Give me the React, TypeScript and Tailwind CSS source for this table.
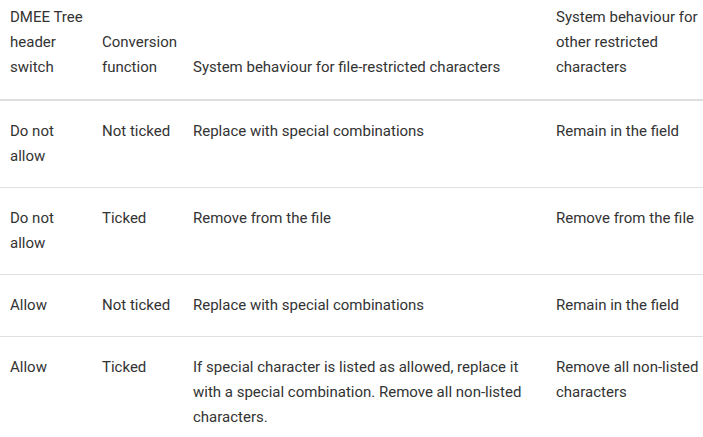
import React from "react";

const rows = [
  ["Do not allow", "Not ticked", "Replace with special combinations", "Remain in the field"],
  ["Do not allow", "Ticked", "Remove from the file", "Remove from the file"],
  ["Allow", "Not ticked", "Replace with special combinations", "Remain in the field"],
  [
    "Allow",
    "Ticked",
    "If special character is listed as allowed, replace it with a special combination. Remove all non-listed characters.",
    "Remove all non-listed characters",
  ],
];

const headers = [
  "DMEE Tree header switch",
  "Conversion function",
  "System behaviour for file-restricted characters",
  "System behaviour for other restricted characters",
];

const widths = ["w-[92px]", "w-[91px]", "w-[363px]", "w-[157px]"];

export default function App() {
  return (
    <div className="w-[703px] h-[437px] overflow-hidden bg-white font-['Roboto',sans-serif] text-[15px] leading-[25px] text-[#333]">
      <table className="w-[703px] table-fixed border-collapse">
        <colgroup>
          {widths.map((w, i) => (
            <col key={i} className={w} />
          ))}
        </colgroup>
        <thead>
          <tr className="border-b-2 border-[#dedede]">
            {headers.map((h, i) => (
              <th key={i} className="align-bottom text-left font-normal pl-[10px] pr-[4px] pt-[5px] pb-[19px]">
                {h}
              </th>
            ))}
          </tr>
        </thead>
        <tbody>
          {rows.map((r, i) => (
            <tr key={i} className="border-b border-[#e0e0e0]">
              {r.map((c, j) => (
                <td key={j} className="align-top pl-[10px] pr-[4px] py-[18px]">
                  {c}
                </td>
              ))}
            </tr>
          ))}
        </tbody>
      </table>
    </div>
  );
}
